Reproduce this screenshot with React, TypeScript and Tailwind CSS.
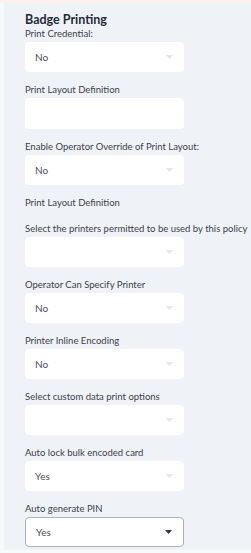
import React from "react";

type Field = {
  label: string;
  kind: "select" | "input" | "none";
  value?: string;
  active?: boolean;
};

const fields: Field[] = [
  { label: "Print Credential:", kind: "select", value: "No" },
  { label: "Print Layout Definition", kind: "input" },
  { label: "Enable Operator Override of Print Layout:", kind: "select", value: "No" },
  { label: "Print Layout Definition", kind: "none" },
  { label: "Select the printers permitted to be used by this policy", kind: "select", value: "" },
  { label: "Operator Can Specify Printer", kind: "select", value: "No" },
  { label: "Printer Inline Encoding", kind: "select", value: "No" },
  { label: "Select custom data print options", kind: "select", value: "" },
  { label: "Auto lock bulk encoded card", kind: "select", value: "Yes" },
  { label: "Auto generate PIN", kind: "select", value: "Yes", active: true },
];

function Caret({ dark }: { dark?: boolean }) {
  return (
    <svg width="7" height="4" viewBox="0 0 7 4" className="shrink-0">
      <path d="M0 0 L7 0 L3.5 4 Z" fill={dark ? "#27384a" : "#e3e7ec"} />
    </svg>
  );
}

function FieldRow({ f }: { f: Field }) {
  return (
    <div className="flex flex-col">
      <label className="h-[16px] leading-[16px] text-[9.5px] text-[#3b4048] whitespace-nowrap">
        {f.label}
      </label>
      {f.kind === "select" && (
        <div
          className={
            "w-[159px] h-[30px] bg-white rounded-[4px] flex items-center justify-between pl-[10px] pr-[11px] " +
            (f.active ? "border border-[#a9b1ba]" : "")
          }
        >
          <span className="text-[10px] text-[#4a4f57]">{f.value}</span>
          <Caret dark={f.active} />
        </div>
      )}
      {f.kind === "input" && (
        <div className="w-[159px] h-[31px] bg-white rounded-[4px]" />
      )}
    </div>
  );
}

export default function App() {
  return (
    <div className="w-[251px] h-[553px] bg-[#fdf1ed] pt-[3px] font-['Lato',sans-serif] overflow-hidden">
      <div className="flex h-[547px]">
        <div className="w-[4px] bg-[#f7f9fb]" />
        <div className="flex-1 bg-[#eff3f8] pl-[21px] pt-[11px] flex flex-col">
          <h2 className="h-[12px] leading-[12px] text-[12.5px] font-bold text-[#1f2a37]">
            Badge Printing
          </h2>
          <div className="flex flex-col gap-[10px]">
            {fields.map((f, i) => (
              <FieldRow key={i} f={f} />
            ))}
          </div>
        </div>
      </div>
      <div className="h-[3px] bg-[#f7f9fb]" />
    </div>
  );
}
